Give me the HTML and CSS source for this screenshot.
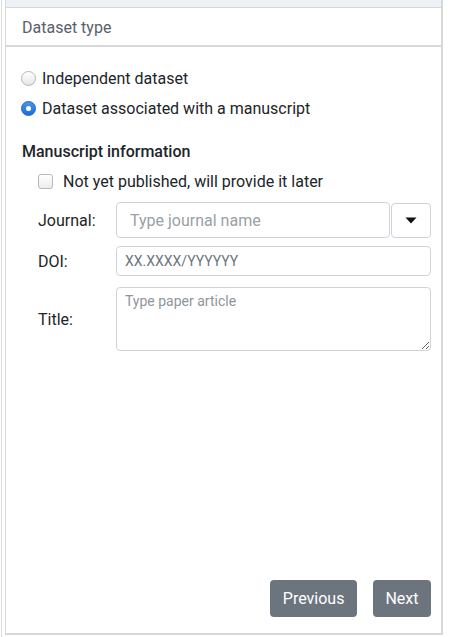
FILE: index.html
```html
<!DOCTYPE html>
<html>
<head>
<meta charset="utf-8">
<link rel="stylesheet" href="styles.css">
</head>
<body>
<div class="frame">
  <div class="card">
    <div class="prev"></div>
    <div class="header">Dataset type</div>
    <div class="body">
      <label class="radio-row"><span class="radio"></span>Independent dataset</label>
      <label class="radio-row"><span class="radio checked"></span>Dataset associated with a manuscript</label>
      <div class="section-title">Manuscript information</div>
      <label class="check-row"><span class="checkbox"></span>Not yet published, will provide it later</label>
      <div class="field journal">
        <span class="field-label">Journal:</span>
        <div class="combo">
          <input class="input input-lg" type="text" placeholder="Type journal name">
          <button class="caret-btn" type="button"><svg width="12" height="7" viewBox="0 0 12 7"><path d="M0.5 0.5 H11.5 L6 6.5 Z" fill="#111"/></svg></button>
        </div>
      </div>
      <div class="field doi">
        <span class="field-label">DOI:</span>
        <input class="input input-sm" type="text" placeholder="XX.XXXX/YYYYYY">
      </div>
      <div class="field title">
        <span class="field-label">Title:</span>
        <textarea class="textarea" placeholder="Type paper article"></textarea>
      </div>
      <div class="actions">
        <button class="btn" type="button">Previous</button>
        <button class="btn" type="button">Next</button>
      </div>
    </div>
  </div>
</div>
</body>
</html>
```
FILE: styles.css
```css
html, body {
  margin: 0;
  padding: 0;
  background: #fff;
}
body {
  font-family: Roboto, "Liberation Sans", sans-serif;
  color: #212529;
}
.frame {
  margin-left: 1px;
  border-left: 1px solid #dcdcdc;
  padding-left: 3px;
  height: 637px;
  box-sizing: border-box;
}
.card {
  width: 438px;
  height: 635px;
  box-sizing: border-box;
  border-left: 1px solid #d8d8d8;
  border-right: 2px solid #d8d8d8;
  border-bottom: 2px solid #d8d8d8;
  display: flex;
  flex-direction: column;
}
.prev {
  height: 7px;
  background: #eef1f5;
  border-bottom: 1px solid #d6d6d6;
}
.header {
  height: 39px;
  box-sizing: border-box;
  padding-left: 16px;
  display: flex;
  align-items: center;
  font-size: 16px;
  color: #5a6068;
  border-bottom: 2px solid #d8d8d8;
  padding-top: 2px;
}
.body {
  flex: 1;
  display: flex;
  flex-direction: column;
  padding: 16px 10px 16px 15px;
}
.radio-row {
  height: 30px;
  display: flex;
  align-items: center;
  font-size: 16px;
}
.radio {
  width: 15px;
  height: 15px;
  box-sizing: border-box;
  border-radius: 50%;
  border: 1px solid #b4b4b4;
  background: linear-gradient(#ffffff, #e6e6e6);
  margin-right: 6px;
  position: relative;
  flex: none;
}
.radio.checked {
  border-color: #1a63c9;
  background: linear-gradient(#4a93ef, #1b6fd9);
}
.radio.checked::after {
  content: "";
  position: absolute;
  left: 4px;
  top: 4px;
  width: 5px;
  height: 5px;
  border-radius: 50%;
  background: #fff;
}
.section-title {
  margin-top: 17px;
  margin-left: 1px;
  font-size: 16px;
  font-weight: 500;
  line-height: 24px;
}
.check-row {
  margin-top: 2px;
  margin-left: 17px;
  height: 30px;
  display: flex;
  align-items: center;
  font-size: 16px;
}
.checkbox {
  width: 15px;
  height: 15px;
  box-sizing: border-box;
  border: 1px solid #b8b8b8;
  border-radius: 3px;
  background: linear-gradient(#ffffff, #ececec);
  margin-right: 10px;
  flex: none;
}
.field {
  display: flex;
  align-items: center;
  margin-left: 17px;
}
.field-label {
  width: 78px;
  flex: none;
  font-size: 16px;
}
.journal { margin-top: 6px; }
.doi { margin-top: 8px; }
.title { margin-top: 11px; }
.combo {
  flex: 1;
  display: flex;
}
.input {
  box-sizing: border-box;
  border: 1px solid #ced4da;
  border-radius: 4px;
  font-family: Roboto, "Liberation Sans", sans-serif;
  color: #495057;
  outline: none;
  margin: 0;
}
.input::placeholder, .textarea::placeholder {
  color: #8f959b;
}
.input-lg {
  flex: 1;
  height: 36px;
  padding: 0 13px;
  font-size: 16px;
  min-width: 0;
}
.input-lg::placeholder { color: #9aa0a6; }
.caret-btn {
  width: 40px;
  height: 35px;
  margin-top: 1px;
  margin-left: 1px;
  box-sizing: border-box;
  border: 1px solid #ced4da;
  border-radius: 4px;
  background: #fff;
  display: flex;
  align-items: center;
  justify-content: center;
  padding: 0;
}
.input-sm {
  flex: 1;
  height: 30px;
  padding: 0 8px;
  font-size: 14px;
  min-width: 0;
}
.input-sm::placeholder { color: #6c757d; }
.textarea {
  flex: 1;
  height: 64px;
  box-sizing: border-box;
  border: 1px solid #ced4da;
  border-radius: 4px;
  padding: 5px 8px;
  font-family: Roboto, "Liberation Sans", sans-serif;
  font-size: 14px;
  color: #495057;
  margin: 0;
  resize: vertical;
  outline: none;
}
.actions {
  margin-top: auto;
  display: flex;
  justify-content: flex-end;
  gap: 16px;
}
.btn {
  height: 37px;
  padding: 0 12.5px;
  border: none;
  border-radius: 4px;
  background: #6c757d;
  color: #fff;
  font-family: Roboto, "Liberation Sans", sans-serif;
  font-size: 16px;
}
```
